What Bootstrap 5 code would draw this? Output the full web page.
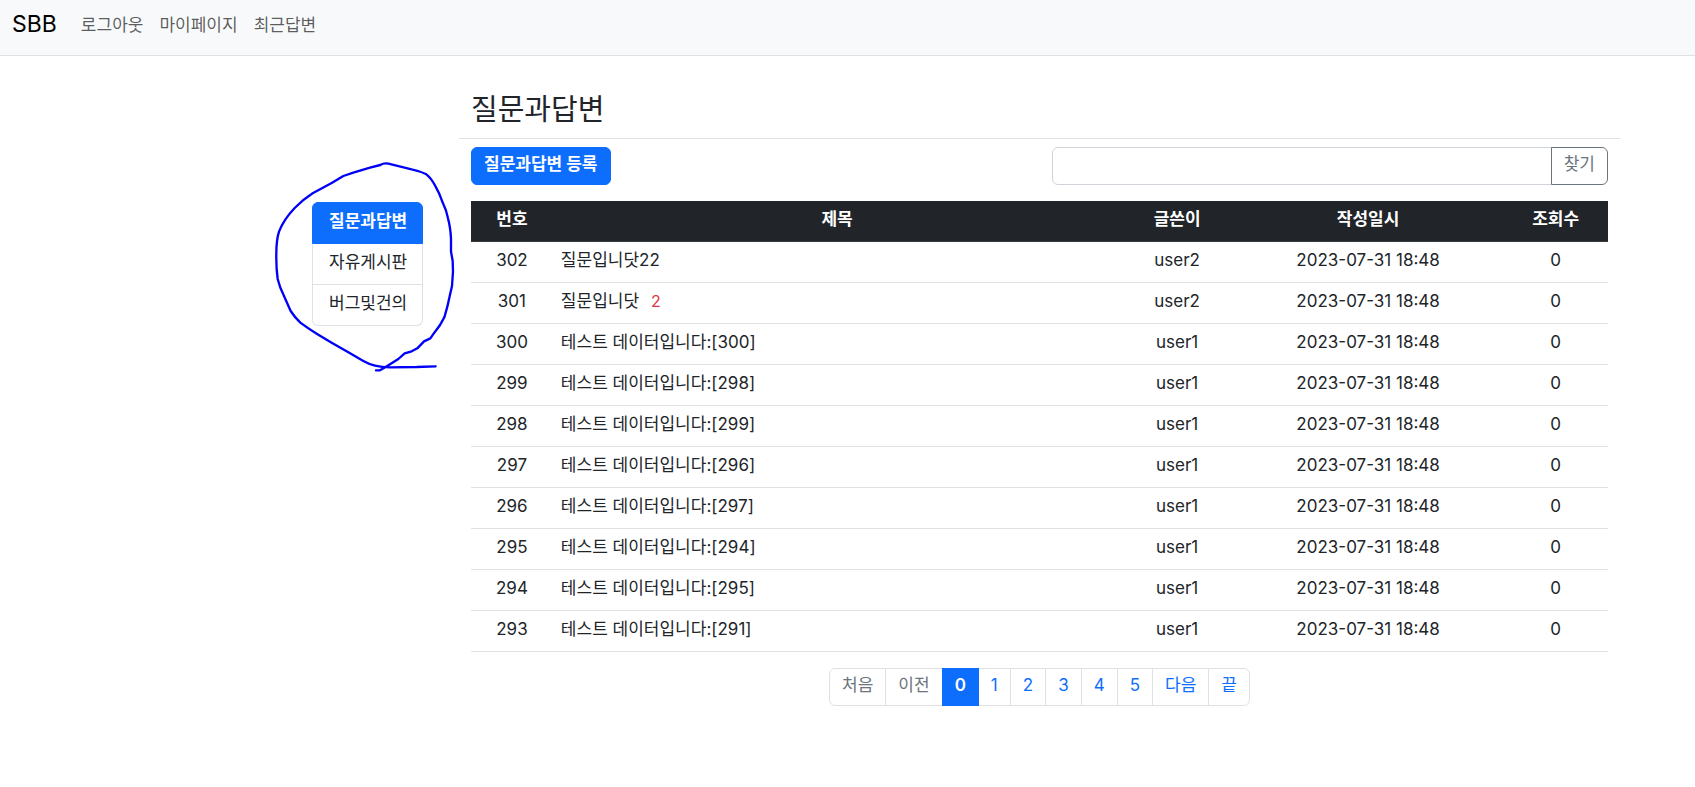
<!DOCTYPE html>
<html lang="ko">
<head>
<meta charset="utf-8">
<meta name="viewport" content="width=device-width, initial-scale=1">
<title>SBB</title>
<link href="https://cdn.jsdelivr.net/npm/bootstrap@5.3.0/dist/css/bootstrap.min.css" rel="stylesheet">
<style>
  body { font-family: Inter, "Noto Sans CJK KR", sans-serif; font-size: 17px; line-height: 24px; }
  .btn, .form-control, .page-link, .navbar-nav { font-size: 17px; line-height: 24px; }
  .btn, .page-link { padding: 4px 12px 8px; }
  .form-control { border-color: #ced4da; }
  .btn-outline-secondary { --bs-btn-color: #6c757d; --bs-btn-border-color: #6c757d; }
  .page-item.disabled .page-link { color: #6c757d; }
  .site-nav { padding: 5px 0 10px; }
  .site-nav .navbar-brand { font-size: 23px; line-height: 30px; padding: 4px 0 6px; margin-right: 16px; }
  .side { flex: 0 0 459px; padding: 146px 36px 0 0; }
  .board-menu { width: 111px; }
  .board-menu .list-group-item { padding: 6px 16px 10px; white-space: nowrap; }
  .pen { position: absolute; left: -52px; top: -52px; width: 210px; height: 230px; pointer-events: none; z-index: 3; }
  .board { padding: 36px 75px 0 0; min-width: 0; }
  .board-title { font-size: 29px; line-height: 35px; font-weight: 400; padding: 0 12px 11px; margin: 0; }
  .board-body { padding: 0 12px; }
  .board-table { table-layout: fixed; }
  .board-table > :not(caption) > * > * { padding: 6px 8px 10px; }
  .c-no { width: 7.2%; } .c-title { width: 50%; } .c-user { width: 9.8%; } .c-date { width: 23.8%; } .c-hit { width: 9.2%; }
  .replies { font-size: 16px; line-height: 20px; margin-left: 12px; }
</style>
</head>
<body>
<nav class="navbar navbar-expand-lg navbar-light bg-light border-bottom site-nav">
  <div class="container-fluid">
    <a class="navbar-brand" href="#">SBB</a>
    <div class="collapse navbar-collapse">
      <ul class="navbar-nav">
        <li class="nav-item"><a class="nav-link" href="#">로그아웃</a></li>
        <li class="nav-item"><a class="nav-link" href="#">마이페이지</a></li>
        <li class="nav-item"><a class="nav-link" href="#">최근답변</a></li>
      </ul>
    </div>
  </div>
</nav>
<div class="d-flex">
  <aside class="side d-flex justify-content-end align-items-start">
    <div class="position-relative">
      <div class="list-group board-menu">
        <a class="list-group-item list-group-item-action active fw-bold" href="#">질문과답변</a>
        <a class="list-group-item list-group-item-action text-body" href="#">자유게시판</a>
        <a class="list-group-item list-group-item-action text-body" href="#">버그및건의</a>
      </div>
      <svg class="pen" viewBox="0 0 630 690" fill="none" stroke="#0000f8" stroke-width="7" stroke-linecap="round" stroke-linejoin="round" aria-hidden="true">
        <path d="M348 661H360L377 651L415 627L434 610L455 604L472 595L492 574L511 565L523 548Q542 526 553 502L562 470L570 434L576 408L579 365L578 332L573 305V265Q571 230 564 205Q559 180 549 160Q538 128 525 106Q513 84 499 73Q480 63 455 58L385 41Q372 38 361 45L330 53L280 68L250 78L215 99L158 130Q130 148 104 174Q70 210 57 245Q49 270 49 310Q48 350 53 387Q59 412 72 438L92 483Q105 503 121 518Q145 536 170 551L215 578L265 607L310 633Q328 643 345 647Q365 652 390 652L470 651L527 649"/>
      </svg>
    </div>
  </aside>
  <main class="board flex-grow-1">
    <h3 class="board-title border-bottom">질문과답변</h3>
    <div class="row mx-0 mt-2 mb-3">
      <div class="col-6"><a class="btn btn-primary fw-bold" href="#">질문과답변 등록</a></div>
      <div class="col-6">
        <form class="input-group">
          <input type="text" class="form-control" aria-label="검색어">
          <button class="btn btn-outline-secondary" type="button">찾기</button>
        </form>
      </div>
    </div>
    <div class="board-body">
      <table class="table board-table text-center mb-3">
        <thead class="table-dark">
          <tr><th class="c-no">번호</th><th class="c-title">제목</th><th class="c-user">글쓴이</th><th class="c-date">작성일시</th><th class="c-hit">조회수</th></tr>
        </thead>
        <tbody>
          <tr><td>302</td><td class="text-start">질문입니닷22</td><td>user2</td><td>2023-07-31 18:48</td><td>0</td></tr>
          <tr><td>301</td><td class="text-start">질문입니닷<span class="replies text-danger">2</span></td><td>user2</td><td>2023-07-31 18:48</td><td>0</td></tr>
          <tr><td>300</td><td class="text-start">테스트 데이터입니다:[300]</td><td>user1</td><td>2023-07-31 18:48</td><td>0</td></tr>
          <tr><td>299</td><td class="text-start">테스트 데이터입니다:[298]</td><td>user1</td><td>2023-07-31 18:48</td><td>0</td></tr>
          <tr><td>298</td><td class="text-start">테스트 데이터입니다:[299]</td><td>user1</td><td>2023-07-31 18:48</td><td>0</td></tr>
          <tr><td>297</td><td class="text-start">테스트 데이터입니다:[296]</td><td>user1</td><td>2023-07-31 18:48</td><td>0</td></tr>
          <tr><td>296</td><td class="text-start">테스트 데이터입니다:[297]</td><td>user1</td><td>2023-07-31 18:48</td><td>0</td></tr>
          <tr><td>295</td><td class="text-start">테스트 데이터입니다:[294]</td><td>user1</td><td>2023-07-31 18:48</td><td>0</td></tr>
          <tr><td>294</td><td class="text-start">테스트 데이터입니다:[295]</td><td>user1</td><td>2023-07-31 18:48</td><td>0</td></tr>
          <tr><td>293</td><td class="text-start">테스트 데이터입니다:[291]</td><td>user1</td><td>2023-07-31 18:48</td><td>0</td></tr>
        </tbody>
      </table>
      <ul class="pagination justify-content-center mb-0">
        <li class="page-item disabled"><a class="page-link bg-white" href="#">처음</a></li>
        <li class="page-item disabled"><a class="page-link bg-white" href="#">이전</a></li>
        <li class="page-item active"><a class="page-link fw-semibold" href="#">0</a></li>
        <li class="page-item"><a class="page-link" href="#">1</a></li>
        <li class="page-item"><a class="page-link" href="#">2</a></li>
        <li class="page-item"><a class="page-link" href="#">3</a></li>
        <li class="page-item"><a class="page-link" href="#">4</a></li>
        <li class="page-item"><a class="page-link" href="#">5</a></li>
        <li class="page-item"><a class="page-link" href="#">다음</a></li>
        <li class="page-item"><a class="page-link" href="#">끝</a></li>
      </ul>
    </div>
  </main>
</div>
<script src="https://cdn.jsdelivr.net/npm/bootstrap@5.3.0/dist/js/bootstrap.bundle.min.js"></script>
</body>
</html>
